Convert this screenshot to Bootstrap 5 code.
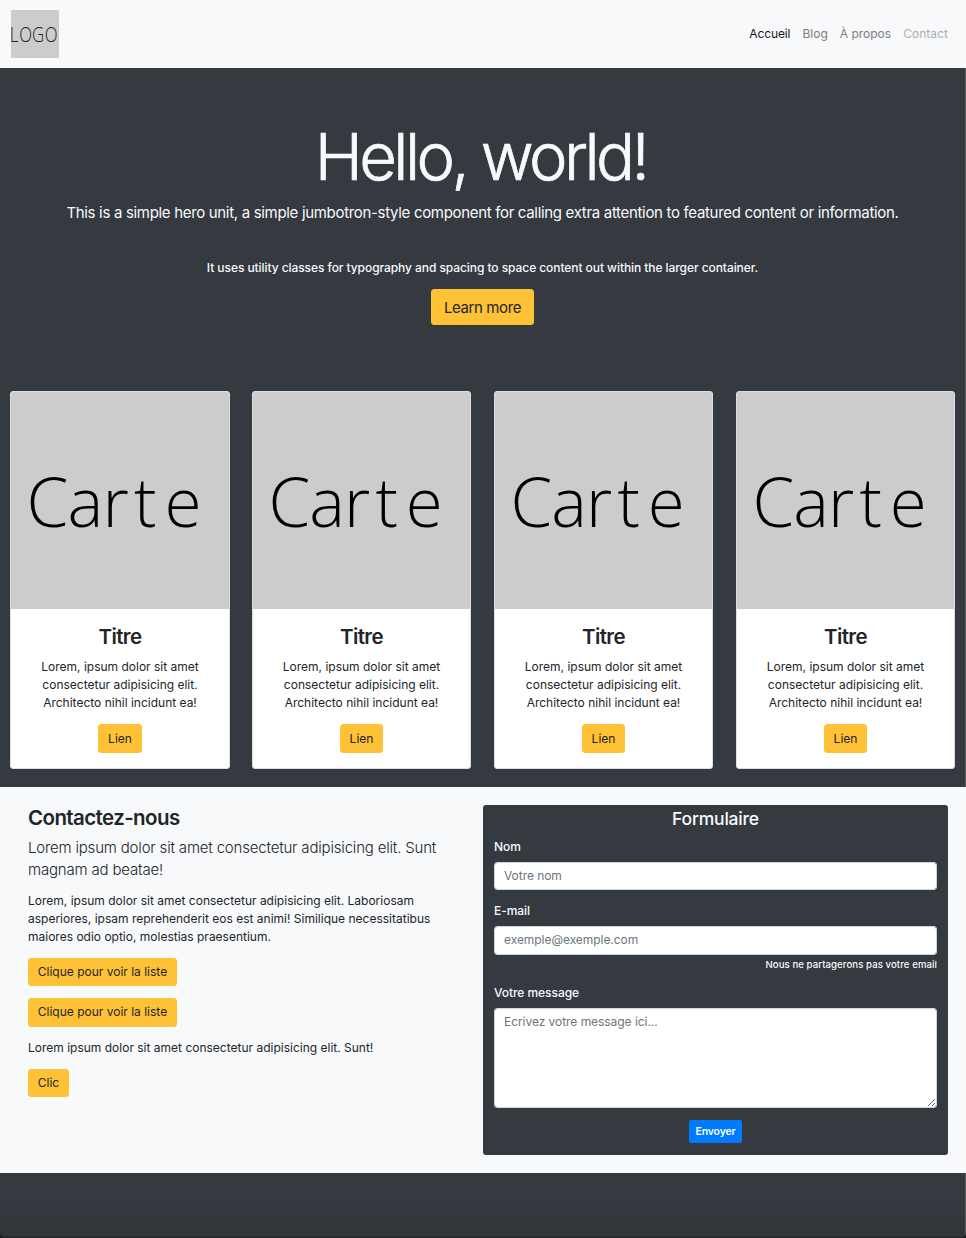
<!DOCTYPE html>
<html lang="fr">
<head>
<meta charset="utf-8">
<meta name="viewport" content="width=device-width, initial-scale=1">
<title>Accueil</title>
<link href="https://cdn.jsdelivr.net/npm/bootstrap@5.3.0/dist/css/bootstrap.min.css" rel="stylesheet">
<style>
:root{font-size:12px}
body{font-family:Inter,"Liberation Sans",sans-serif;font-size:12px;line-height:18px;color:#212529;background:#17191b;height:1238px;overflow:hidden}
.page{height:1238px;background:linear-gradient(270deg,#5c6065 1px,transparent 1px),linear-gradient(#353940 1200px,#32373a 1222px,#303538 1236px,#25282a 1237px);border-radius:0 0 5px 5px;overflow:hidden}
.lightbg{background:#f8f9fb}
.topbar{height:68px;padding:0 12px 0 11px}
.nav-link{padding:6px;color:#7c7d7e;font-size:12px}
.nav-link.active{color:#171717;letter-spacing:-.1px}
.nav-link.disabled{color:#adaeb0;letter-spacing:.04px}
.hero{height:323px;padding:49px 1px 0 0;color:#f8f9fc}
.hero h1{font-size:65px;line-height:79px;font-weight:300;-webkit-text-stroke:.7px currentColor;margin-bottom:6px;letter-spacing:-3.6px;padding-right:4px}
.lead{font-size:15px;line-height:22px;font-weight:300;letter-spacing:-.18px}
.lead.first{padding-top:1px;margin-bottom:11px}
.hero .lead{font-weight:400;margin-bottom:35px;letter-spacing:-.32px}
.hero .detail{font-weight:500;margin-bottom:12px;letter-spacing:-.07px}
.btn{--bs-btn-font-size:12px;--bs-btn-padding-x:8.75px;--bs-btn-padding-y:4.25px;--bs-btn-border-radius:3px;line-height:18px}
.btn-warning{--bs-btn-bg:#ffc135;--bs-btn-border-color:#ffc135;--bs-btn-color:#212529}
.btn-lg{--bs-btn-font-size:15px;--bs-btn-padding-x:12px;line-height:22px;letter-spacing:-.4px;padding-top:7px;padding-bottom:5px}
.btn-primary{--bs-btn-bg:#007bff;--bs-btn-border-color:#007bff;--bs-btn-font-size:10.5px;--bs-btn-padding-y:3px;--bs-btn-padding-x:5.5px;--bs-btn-border-radius:2px;font-weight:600;line-height:15px;letter-spacing:-.15px}
.cards{display:grid;grid-template-columns:repeat(4,219px);gap:23px;margin-left:10px}
.card{--bs-card-border-color:#dcddde;--bs-card-border-radius:3px;--bs-card-inner-border-radius:2px;height:378px;color:#212529}
.card:first-child{margin-right:-1px}
.card-img-top{display:block;height:217px}
.card-body{padding:15px}
.card-body p{margin-bottom:12px}
.card .btn{padding-top:5px;padding-bottom:4px}
.h-title{font-size:20.5px;line-height:25px;font-weight:600;letter-spacing:-.6px}
.card-title{margin-bottom:9px}
.contact{margin-top:18px;height:386px;padding:18px 18px 18px 28px}
.intro{width:432px}
.intro .h-title{margin-bottom:6px}
.actions{gap:12px;padding-top:12px}
.actions .btn{padding-top:4px;padding-bottom:4px}
.actions .btn:nth-child(2){padding-bottom:5px}
.formbox{width:465px;height:350px;background:#353940;color:#f8f9fc;border-radius:3px;padding:3px 11px 12px}
.formbox h3{font-size:17.5px;line-height:22px;font-weight:500;margin-bottom:8px;letter-spacing:-.2px}
.field{margin-bottom:12px}
.form-label{display:block;margin-bottom:6px;font-weight:500;letter-spacing:-.06px}
.form-control{font-size:12px;line-height:18px;height:28px;min-height:0;padding:3px 9px 5px;border:1px solid #ced4da;border-radius:3px;letter-spacing:-.05px}
.form-control::placeholder{color:#6c757d}
input.form-control[type=email]{height:29px}
textarea.form-control{height:100px;min-height:0;padding-top:4px}
.form-text{font-size:9.6px;line-height:14px;color:inherit;font-weight:500;margin-top:3px;letter-spacing:.08px}
</style>
</head>
<body>
<div class="page">
<nav class="topbar lightbg d-flex align-items-center justify-content-between">
<svg width="48" height="48" role="img" aria-label="Logo"><rect width="48" height="48" fill="#ccc"/><text transform="scale(.84 1)" x="-1.4 9.8 25 40.2" y="32" font-family="Open Sans" font-weight="300" font-size="20" fill="#222">LOGO</text></svg>
<div class="nav"><a class="nav-link active" href="#">Accueil</a><a class="nav-link" href="#">Blog</a><a class="nav-link" href="#">À propos</a><a class="nav-link disabled">Contact</a></div>
</nav>
<header class="hero text-center">
<h1>Hello, world!</h1>
<p class="lead">This is a simple hero unit, a simple jumbotron-style component for calling extra attention to featured content or information.</p>
<p class="detail">It uses utility classes for typography and spacing to space content out within the larger container.</p>
<a class="btn btn-warning btn-lg" href="#">Learn more</a>
</header>
<main>
<section class="cards text-center">
<article class="card"><svg class="card-img-top" viewBox="0 0 218 217" preserveAspectRatio="none"><rect width="218" height="217" fill="#ccc"/><text x="15.5 56.5 91.5 123 153.5" y="135" font-family="Open Sans" font-weight="300" font-size="67.5">Carte</text></svg>
<div class="card-body"><h2 class="h-title card-title">Titre</h2><p>Lorem, ipsum dolor sit amet<br>consectetur adipisicing elit.<br>Architecto nihil incidunt ea!</p><a class="btn btn-warning" href="#">Lien</a></div></article>
<article class="card"><svg class="card-img-top" viewBox="0 0 218 217" preserveAspectRatio="none"><rect width="218" height="217" fill="#ccc"/><text x="15.5 56.5 91.5 123 153.5" y="135" font-family="Open Sans" font-weight="300" font-size="67.5">Carte</text></svg>
<div class="card-body"><h2 class="h-title card-title">Titre</h2><p>Lorem, ipsum dolor sit amet<br>consectetur adipisicing elit.<br>Architecto nihil incidunt ea!</p><a class="btn btn-warning" href="#">Lien</a></div></article>
<article class="card"><svg class="card-img-top" viewBox="0 0 218 217" preserveAspectRatio="none"><rect width="218" height="217" fill="#ccc"/><text x="15.5 56.5 91.5 123 153.5" y="135" font-family="Open Sans" font-weight="300" font-size="67.5">Carte</text></svg>
<div class="card-body"><h2 class="h-title card-title">Titre</h2><p>Lorem, ipsum dolor sit amet<br>consectetur adipisicing elit.<br>Architecto nihil incidunt ea!</p><a class="btn btn-warning" href="#">Lien</a></div></article>
<article class="card"><svg class="card-img-top" viewBox="0 0 218 217" preserveAspectRatio="none"><rect width="218" height="217" fill="#ccc"/><text x="15.5 56.5 91.5 123 153.5" y="135" font-family="Open Sans" font-weight="300" font-size="67.5">Carte</text></svg>
<div class="card-body"><h2 class="h-title card-title">Titre</h2><p>Lorem, ipsum dolor sit amet<br>consectetur adipisicing elit.<br>Architecto nihil incidunt ea!</p><a class="btn btn-warning" href="#">Lien</a></div></article>
</section>
<section class="contact lightbg d-flex justify-content-between">
<div class="intro">
<h2 class="h-title">Contactez-nous</h2>
<p class="lead first">Lorem ipsum dolor sit amet consectetur adipisicing elit. Sunt<br>magnam ad beatae!</p>
<p class="mb-0">Lorem, ipsum dolor sit amet consectetur adipisicing elit. Laboriosam<br>asperiores, ipsam reprehenderit eos est animi! Similique necessitatibus<br>maiores odio optio, molestias praesentium.</p>
<div class="actions d-flex flex-column align-items-start">
<a class="btn btn-warning" href="#">Clique pour voir la liste</a>
<a class="btn btn-warning" href="#">Clique pour voir la liste</a>
<p class="mb-0">Lorem ipsum dolor sit amet consectetur adipisicing elit. Sunt!</p>
<a class="btn btn-warning" href="#">Clic</a>
</div>
</div>
<form class="formbox">
<h3 class="text-center">Formulaire</h3>
<div class="field"><label class="form-label" for="nom">Nom</label><input id="nom" class="form-control" placeholder="Votre nom"></div>
<div class="field"><label class="form-label" for="mail">E-mail</label><input id="mail" type="email" class="form-control" placeholder="exemple@exemple.com">
<div class="form-text text-end">Nous ne partagerons pas votre email</div></div>
<div class="field"><label class="form-label" for="msg">Votre message</label><textarea id="msg" class="form-control" placeholder="Ecrivez votre message ici..."></textarea></div>
<div class="text-center"><button type="button" class="btn btn-primary">Envoyer</button></div>
</form>
</section>
</main>
</div>
<script src="https://cdn.jsdelivr.net/npm/bootstrap@5.3.0/dist/js/bootstrap.bundle.min.js"></script>
</body>
</html>
